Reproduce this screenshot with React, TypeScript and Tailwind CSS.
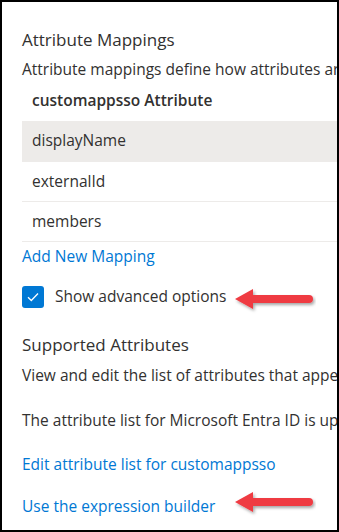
import React from 'react';

const FONT = { fontFamily: '"Open Sans", "Noto Sans", Arial, sans-serif' };

function Arrow({ top }: { top: string }) {
  return (
    <svg width="84" height="28" viewBox="0 0 84 28" className={`absolute left-[210px] ${top}`}>
      <defs>
        <filter id="sh" x="-20%" y="-40%" width="140%" height="180%">
          <feDropShadow dx="1.5" dy="2" stdDeviation="1.5" floodColor="#000" floodOpacity="0.35" />
        </filter>
      </defs>
      <g filter="url(#sh)">
        <path d="M3 13 L21 3 L21 23 Z" fill="#ef3b43" />
        <line x1="19" y1="13" x2="77" y2="13" stroke="#ef3b43" strokeWidth="8" strokeLinecap="round" />
      </g>
    </svg>
  );
}

const rows = ['displayName', 'externalId', 'members'];

export default function App() {
  return (
    <div
      className="w-[339px] h-[532px] border-2 border-black bg-white overflow-hidden text-[#323130]"
      style={FONT}
    >
      <div className="pl-5 pt-[26px]">
        <h2 className="text-[17px] leading-6 whitespace-nowrap">Attribute Mappings</h2>
        <p className="text-[15.5px] leading-5 mt-[7px] whitespace-nowrap">
          Attribute mappings define how attributes are synchronized between Microsoft Entra ID and customappsso
        </p>

        {/* table */}
        <div className="mt-[2px]">
          <div className="h-10 flex items-center pl-[10px] text-[15.5px] font-semibold whitespace-nowrap">
            customappsso Attribute
          </div>
          {rows.map((r, i) => (
            <div
              key={r}
              className={`h-10 flex items-center pl-[10px] text-[15.5px] whitespace-nowrap ${
                i === 0 ? 'bg-[#edebe9]' : 'border-t border-[#edebe9]'
              }`}
            >
              {r}
            </div>
          ))}
          <div className="border-t border-[#edebe9]" />
        </div>

        <a className="block text-[15.5px] leading-5 text-[#0078d4] mt-[4px] whitespace-nowrap">Add New Mapping</a>

        <div className="relative flex items-center mt-[20px] h-[22px]">
          <div className="w-[22px] h-[22px] rounded-[3px] bg-[#0078d4] flex items-center justify-center">
            <svg width="12" height="10" viewBox="0 0 12 10">
              <path d="M1 5.2 L4.3 8.5 L11 1.5" fill="none" stroke="#fff" strokeWidth="1.3" />
            </svg>
          </div>
          <span className="ml-[11px] text-[15.5px] whitespace-nowrap">Show advanced options</span>
          <Arrow top="top-0" />
        </div>

        <h2 className="text-[17px] leading-6 mt-[25px] whitespace-nowrap">Supported Attributes</h2>
        <p className="text-[15.5px] leading-5 mt-[8px] whitespace-nowrap">
          View and edit the list of attributes that appear in the source and target systems.
        </p>
        <p className="text-[15.5px] leading-5 mt-[25px] whitespace-nowrap">
          The attribute list for Microsoft Entra ID is updated automatically.
        </p>
        <a className="block text-[15.5px] leading-5 text-[#0078d4] mt-[24px] whitespace-nowrap">
          Edit attribute list for customappsso
        </a>
        <div className="relative mt-[22px] h-5 flex items-center">
          <a className="block text-[15.5px] leading-5 text-[#0078d4] whitespace-nowrap">Use the expression builder</a>
          <Arrow top="top-[-7px]" />
        </div>
      </div>
    </div>
  );
}
